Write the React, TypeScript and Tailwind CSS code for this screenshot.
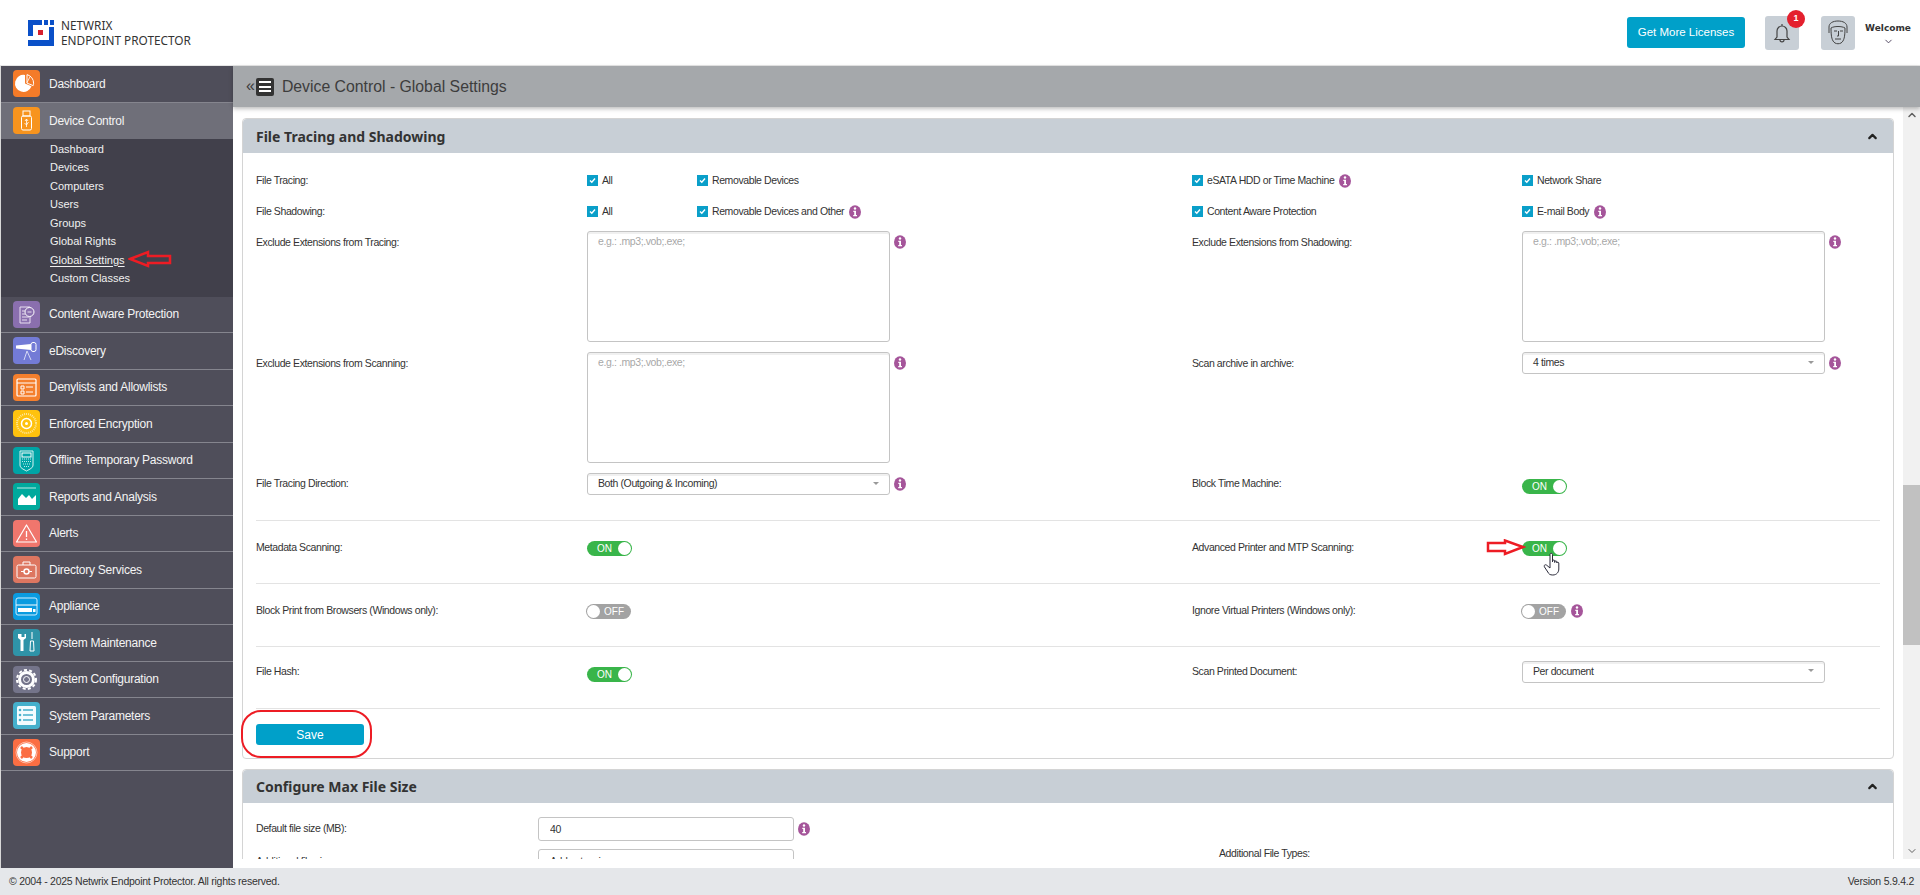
import React from "react";
import { ChevronDown, ChevronUp } from "lucide-react";

type IconProps = { className?: string };

const TileIcons: Record<string, React.ReactNode> = {
    pie: (
        <>
            <path d="M12 13.500V5a8.500 8.500 0 1 0 6.500 11.200z" fill="#fff" />
            <path d="M14 4.600a8.800 8.800 0 0 1 6.600 8.600c0 1-.1 1.700-.4 2.400l-6.200-2.500z" fill="none" stroke="#fff" strokeWidth="1" />
            <path d="M14 12.600l3.400-6.600" stroke="#fff" strokeWidth=".8" />
        </>
    ),
    usb: (
        <>
            <rect x="10" y="4" width="7" height="5" fill="none" stroke="#fff" />
            <rect x="8.500" y="9" width="10" height="14" rx="1.500" fill="none" stroke="#fff" />
            <path d="M13.500 12v8M12 14l1.500-2 1.500 2M11.500 16l2 2 2-3" fill="none" stroke="#fff" strokeWidth=".8" />
        </>
    ),
    doc: (
        <>
            <path d="M7 6h10v16H7z" fill="none" stroke="#e8dff0" />
            <circle cx="16.500" cy="11" r="4.500" fill="#8a6fae" stroke="#fff" />
            <path d="M9 10h3M9 13h3M9 16h7M9 19h5M14.500 11h4" stroke="#e8dff0" />
        </>
    ),
    scope: (
        <>
            <path d="M3 8.500l15-1.500v6L3 11.500z" fill="#fff" />
            <rect x="18" y="5.500" width="5" height="9" rx="2" fill="none" stroke="#fff" />
            <path d="M14 14l-3 9M14 14l4 9" stroke="#d5d8f4" fill="none" />
        </>
    ),
    browser: (
        <>
            <rect x="4" y="5" width="19" height="17" rx="1" fill="none" stroke="#fff" strokeWidth="1.200" />
            <path d="M4 9h19M8 12h3v3H8zM8 17h3v3H8zM13 13h7M13 18h7" stroke="#fff" fill="none" />
        </>
    ),
    dial: (
        <>
            <circle cx="13.500" cy="13.500" r="9.500" fill="none" stroke="#ffe79b" strokeDasharray="1 1" strokeWidth="2" />
            <circle cx="13.500" cy="13.500" r="5" fill="none" stroke="#fff" strokeWidth="1.500" />
            <circle cx="13.500" cy="13.500" r="1.500" fill="#fff" />
        </>
    ),
    token: (
        <>
            <path d="M7 4h13v14c0 3-3 4-6.500 6C10 22 7 21 7 18z" fill="none" stroke="#d8f3f3" />
            <rect x="9" y="6" width="9" height="4" fill="none" stroke="#fff" />
            <path d="M9 12h9M9 14.500h9M10 17h7M11 19.500h5" stroke="#bfe9e9" strokeDasharray="1 1" />
        </>
    ),
    chart: (
        <>
            <path d="M4 5h19" stroke="#bde9e5" />
            <path d="M5 22v-6l4-5 4 4 3-3 3 4 4-4v10z" fill="#fff" />
        </>
    ),
    alert: (
        <>
            <path d="M13.500 5L23.500 22h-20z" fill="none" stroke="#fff" strokeWidth="1.200" strokeLinejoin="round" />
            <path d="M13.500 11v6M13.500 18.500v1.500" stroke="#fff" strokeWidth="1.300" />
        </>
    ),
    case: (
        <>
            <rect x="4" y="9" width="19" height="13" rx="1.500" fill="none" stroke="#fff" />
            <path d="M10 9V6h7v3" fill="none" stroke="#fff" />
            <circle cx="13.500" cy="15.500" r="2.500" fill="none" stroke="#fff" strokeWidth="1.500" />
            <path d="M8 15.500h3M16 15.500h3" stroke="#fff" />
        </>
    ),
    appliance: (
        <>
            <rect x="3" y="5" width="21" height="17" rx="2" fill="none" stroke="#cfeeff" />
            <path d="M3 12h21" stroke="#fff" />
            <path d="M5 15h14v4H5z" fill="#fff" />
            <rect x="20" y="16" width="2.500" height="3" fill="#fff" />
        </>
    ),
    tools: (
        <>
            <path d="M5 5v4l2.500 2v11h3V11L13 9V5l-1.500 0v3h-3V5z" fill="#fff" />
            <path d="M19 3v7M17.500 12h3l.5 10h-4z" stroke="#fff" fill="none" />
        </>
    ),
    gear: (
        <>
            <circle cx="13.500" cy="13.500" r="7" fill="none" stroke="#fff" strokeWidth="3" />
            <circle cx="13.500" cy="13.500" r="9.500" fill="none" stroke="#fff" strokeWidth="2" strokeDasharray="3 2.240" />
            <circle cx="13.500" cy="13.500" r="3" fill="none" stroke="#fff" />
        </>
    ),
    list: (
        <>
            <rect x="4" y="4" width="19" height="19" rx="1.500" fill="#f2fbfe" />
            <path d="M10 8h10M10 13h10M10 18h10" stroke="#45b0cc" strokeWidth="1.300" />
            <circle cx="7" cy="8" r="1.300" fill="#45b0cc" />
            <circle cx="7" cy="13" r="1.300" fill="#45b0cc" />
            <circle cx="7" cy="18" r="1.300" fill="#45b0cc" />
        </>
    ),
    ring: (
        <>
            <circle cx="13.500" cy="13.500" r="7.500" fill="none" stroke="#fff" strokeWidth="4" />
            <circle cx="13.500" cy="13.500" r="10.500" fill="none" stroke="#ffd0c0" strokeWidth=".8" />
            <path d="M8 8l3 3M19 8l-3 3M8 19l3-3M19 19l-3-3" stroke="#fb6e43" strokeWidth="2.500" />
        </>
    ),
};

const menu = [
    { name: "Content Aware Protection", bg: "bg-[#8a6fae]", icon: "doc" },
    { name: "eDiscovery", bg: "bg-[#737bd6]", icon: "scope" },
    { name: "Denylists and Allowlists", bg: "bg-[#f47f2d]", icon: "browser" },
    { name: "Enforced Encryption", bg: "bg-[#ffc20e]", icon: "dial" },
    { name: "Offline Temporary Password", bg: "bg-[#00a4a6]", icon: "token" },
    { name: "Reports and Analysis", bg: "bg-[#00a99d]", icon: "chart" },
    { name: "Alerts", bg: "bg-[#f0766d]", icon: "alert" },
    { name: "Directory Services", bg: "bg-[#dd7660]", icon: "case" },
    { name: "Appliance", bg: "bg-[#0a9be0]", icon: "appliance" },
    { name: "System Maintenance", bg: "bg-[#2f93a8]", icon: "tools" },
    { name: "System Configuration", bg: "bg-[#74748a]", icon: "gear" },
    { name: "System Parameters", bg: "bg-[#45b0cc]", icon: "list" },
    { name: "Support", bg: "bg-[#fb6e43]", icon: "ring" },
];

const subMenu = ["Dashboard", "Devices", "Computers", "Users", "Groups", "Global Rights", "Global Settings", "Custom Classes"];

const Tile = ({ bg, icon }: { bg: string; icon: string }) => (
    <span className={`w-[27px] h-[27px] rounded-[4px] shrink-0 ${bg}`}>
        <svg viewBox="0 0 27 27" className="w-[27px] h-[27px]">{TileIcons[icon]}</svg>
    </span>
);

const MenuItem = ({ name, bg, icon, className = "" }: { name: string; bg: string; icon: string; className?: string }) => (
    <div className={`h-[36.500px] flex items-center pl-[12px] gap-[9px] border-b border-[#85858e] text-[12px] tracking-[-0.25px] text-[#f4f4f4] ${className}`}>
        <Tile bg={bg} icon={icon} />
        <span>{name}</span>
    </div>
);

const Info = ({ className = "" }: IconProps) => (
    <svg viewBox="0 0 12 14" className={`w-[12px] h-[14px] shrink-0 ${className}`}>
        <ellipse cx="6" cy="7" rx="6" ry="6.800" fill="#a5559a" />
        <circle cx="6" cy="3.500" r="1.200" fill="#fff" />
        <path d="M4.300 5.800h2.700v4.200h1v1.200H4.200V10h1V7H4.300z" fill="#fff" />
    </svg>
);

const Check = ({ label, info, className = "" }: { label: string; info?: boolean; className?: string }) => (
    <div className={`flex items-center ${className}`}>
        <span className="w-[11px] h-[11px] bg-[#0a9fc9] flex items-center justify-center -mt-[1px]">
            <svg viewBox="0 0 11 11" className="w-[11px] h-[11px]">
                <path d="M3 5.500l1.800 1.800L8 3.500" fill="none" stroke="#fff" strokeWidth="1.400" />
            </svg>
        </span>
        <span className="ml-[4px]">{label}</span>
        {info && <Info className="ml-[5px]" />}
    </div>
);

const Toggle = ({ on }: { on: boolean }) =>
    on ? (
        <div className="w-[45px] h-[15px] rounded-full bg-[#39b54a] flex items-center justify-between pl-[10px] pr-[1px] text-[10px] tracking-normal text-white">
            <span>ON</span>
            <span className="w-[13px] h-[13px] rounded-full bg-white" />
        </div>
    ) : (
        <div className="w-[45px] h-[15px] rounded-full bg-[#a3a3a3] flex items-center justify-between pl-[1px] pr-[7px] text-[10px] tracking-normal text-white -ml-[1px]">
            <span className="w-[13px] h-[13px] rounded-full bg-white" />
            <span>OFF</span>
        </div>
    );

const Area = () => (
    <textarea
        readOnly
        placeholder="e.g.: .mp3;.vob;.exe;"
        className="w-[303px] h-[111px] border border-[#c4c4c4] rounded-[3px] px-[10px] py-[2px] resize-none outline-none placeholder:text-[#a8a8a8] shadow-[inset_0_2px_0_#f0f0f0]"
    />
);

const Select = ({ value }: { value: string }) => (
    <div className="w-[303px] h-[22px] border border-[#c4c4c4] rounded-[3px] pl-[10px] pr-[10px] flex items-center justify-between shadow-[inset_0_2px_0_#f0f0f0]">
        <span>{value}</span>
        <span className="w-0 h-0 border-x-[3px] border-x-transparent border-t-[3px] border-t-[#999] -mt-[2px]" />
    </div>
);

const Row = ({ className = "", children }: { className?: string; children: React.ReactNode }) => (
    <div className={`grid grid-cols-[331px_605px_330px_1fr] ${className}`}>{children}</div>
);

const PanelHead = ({ title, className = "" }: { title: string; className?: string }) => (
    <div className={`bg-[#c8cfd6] rounded-t-[4px] flex items-center justify-between pl-[13px] pr-[14px] ${className}`}>
        <span className="text-[14px] font-bold tracking-normal text-[#333] font-['Noto_Sans',sans-serif]">{title}</span>
        <ChevronUp className="w-[13px] h-[13px] text-[#222]" strokeWidth={4} />
    </div>
);

const App = () => {
    return (
        <div className="relative h-screen flex flex-col overflow-hidden bg-white text-[10.500px] tracking-[-0.4px] text-[#333] font-['Liberation_Sans',Arial,sans-serif]">
            {/* top bar */}
            <header className="h-[66px] shrink-0 border-b border-[#e6e6e6] flex items-center pl-[28px] pr-[9px] tracking-normal">
                <svg viewBox="0 0 26 26" className="w-[26px] h-[26px]">
                    <path d="M0 0h14v5H5v11H0zM16 0h4v5h-4zM22 0h4v5h-4z" fill="#0a50c8" />
                    <path d="M21 7h5v19H0v-6h21z" fill="#0a50c8" />
                    <rect x="10" y="10" width="5" height="5" fill="#d6202e" />
                </svg>
                <div className="ml-[7px] text-[11.800px] leading-[15px] text-[#333] font-['Noto_Sans',sans-serif]">
                    <div>NETWRIX</div>
                    <div>ENDPOINT PROTECTOR</div>
                </div>
                <div className="ml-auto flex items-center">
                    <button className="w-[118px] h-[31px] rounded-[3px] bg-[#00a0c9] text-white text-[11.500px]">Get More Licenses</button>
                    <div className="relative ml-[20px] w-[34px] h-[34px] rounded-[3px] bg-[#c8cfd6] flex items-center justify-center">
                        <svg viewBox="0 0 24 24" className="w-[24px] h-[24px]" fill="none" stroke="#444" strokeWidth="1.200">
                            <path d="M12 3v2M7 16V10a5 5 0 0 1 10 0v6l2 2.500H5zM10 19c0 2.500 4 2.500 4 0" />
                        </svg>
                        <span className="absolute -top-[6px] -right-[6px] w-[18px] h-[18px] rounded-full bg-[#e4202e] text-white text-[9px] font-bold flex items-center justify-center">1</span>
                    </div>
                    <div className="ml-[22px] w-[34px] h-[34px] rounded-[3px] bg-[#c8cfd6] flex items-center justify-center">
                        <svg viewBox="0 0 26 28" className="w-[26px] h-[28px]" fill="none" stroke="#444" strokeWidth="1">
                            <path d="M4 14V8c0-4 4-6 9-6s9 2 9 6v6M6 9c0 9 1 13 4 15 2 1 4 1 6 0 3-2 4-6 4-15-3-2-11-2-14 0zM9 12h3M15 12h3M13.500 12v5h-1.500M10 20h6" />
                        </svg>
                    </div>
                    <div className="ml-[10px] w-[46px] pt-[4px] flex flex-col items-center gap-[1px] text-[9px] font-bold text-[#333] leading-[13px] font-['DejaVu_Sans',sans-serif]">
                        <span>Welcome</span>
                        <ChevronDown className="w-[11px] h-[11px] text-[#4a3f5c]" strokeWidth={2} />
                    </div>
                </div>
            </header>

            <div className="flex-1 flex min-h-0">
                {/* sidebar */}
                <aside className="w-[233px] shrink-0 bg-[#4f4e5a] border-l border-[#d8d8d8]">
                    <MenuItem name="Dashboard" bg="bg-[#f47b29]" icon="pie" />
                    <MenuItem name="Device Control" bg="bg-[#f7941e]" icon="usb" className="bg-[#6f6f79] border-b-0 h-[36px]" />
                    <div className="h-[158px] bg-[#41404b] pl-[49px] pt-[1px] text-[#f0f0f0] text-[11px] tracking-normal leading-[18.500px]">
                        {subMenu.map((item) => (
                            <div key={item}>
                                <span className={item === "Global Settings" ? "underline underline-offset-2" : ""}>{item}</span>
                            </div>
                        ))}
                    </div>
                    {menu.map((item) => (
                        <MenuItem key={item.name} name={item.name} bg={item.bg} icon={item.icon} />
                    ))}
                </aside>

                {/* page */}
                <main className="flex-1 min-w-0 flex flex-col pb-[9px]">
                    <div className="h-[41px] shrink-0 bg-[#a5a8ab] flex items-center pl-[13px] text-[#3d3d3d] tracking-normal shadow-[0_2px_4px_rgba(0,0,0,0.25)] relative z-10">
                        <span className="text-[16px] leading-none -mt-[2px]">«</span>
                        <span className="w-[18px] h-[18px] ml-[1px] rounded-[2px] bg-[#333] flex flex-col justify-center gap-[2.500px] px-[3px]">
                            <i className="block h-[2px] bg-white" />
                            <i className="block h-[2px] bg-white" />
                            <i className="block h-[2px] bg-white" />
                        </span>
                        <span className="ml-[8px] text-[15.800px]">Device Control - Global Settings</span>
                    </div>

                    <div className="flex-1 min-h-0 flex">
                        <div className="flex-1 min-w-0 overflow-hidden pt-[11px] pl-[9px] pr-[9px]">
                            <section className="h-[641px] border border-[#d4d4d4] rounded-[4px]">
                                <PanelHead title="File Tracing and Shadowing" className="h-[34px]" />
                                <div className="pl-[13px] pr-[13px] pt-[12px]">
                                    <Row className="h-[31px] items-center">
                                        <span>File Tracing:</span>
                                        <div className="flex">
                                            <Check label="All" className="w-[110px]" />
                                            <Check label="Removable Devices" />
                                        </div>
                                        <Check label="eSATA HDD or Time Machine" info />
                                        <Check label="Network Share" />
                                    </Row>
                                    <Row className="h-[31px] items-center">
                                        <span>File Shadowing:</span>
                                        <div className="flex">
                                            <Check label="All" className="w-[110px]" />
                                            <Check label="Removable Devices and Other" info />
                                        </div>
                                        <Check label="Content Aware Protection" />
                                        <Check label="E-mail Body" info />
                                    </Row>
                                    <Row className="mt-[4px]">
                                        <span className="pt-[4px]">Exclude Extensions from Tracing:</span>
                                        <div className="flex gap-[4px]">
                                            <Area />
                                            <Info className="mt-[4px]" />
                                        </div>
                                        <span className="pt-[4px]">Exclude Extensions from Shadowing:</span>
                                        <div className="flex gap-[4px]">
                                            <Area />
                                            <Info className="mt-[4px]" />
                                        </div>
                                    </Row>
                                    <Row className="mt-[10px]">
                                        <span className="pt-[4px]">Exclude Extensions from Scanning:</span>
                                        <div className="flex gap-[4px]">
                                            <Area />
                                            <Info className="mt-[4px]" />
                                        </div>
                                        <span className="pt-[4px]">Scan archive in archive:</span>
                                        <div className="flex gap-[4px] items-start">
                                            <Select value="4 times" />
                                            <Info className="mt-[4px]" />
                                        </div>
                                    </Row>
                                    <Row className="mt-[10px] h-[22px] items-center">
                                        <span>File Tracing Direction:</span>
                                        <div className="flex gap-[4px] items-center">
                                            <Select value="Both (Outgoing & Incoming)" />
                                            <Info />
                                        </div>
                                        <span>Block Time Machine:</span>
                                        <div className="pt-[5px]"><Toggle on /></div>
                                    </Row>
                                    <div className="h-[26px] border-b border-[#e3e3e3]" />
                                    <Row className="h-[63px] pb-[8px] items-center border-b border-[#e3e3e3]">
                                        <span>Metadata Scanning:</span>
                                        <Toggle on />
                                        <span>Advanced Printer and MTP Scanning:</span>
                                        <Toggle on />
                                    </Row>
                                    <Row className="h-[63px] pb-[8px] items-center border-b border-[#e3e3e3]">
                                        <span>Block Print from Browsers (Windows only):</span>
                                        <Toggle on={false} />
                                        <span>Ignore Virtual Printers (Windows only):</span>
                                        <div className="flex items-center gap-[5px]">
                                            <Toggle on={false} />
                                            <Info />
                                        </div>
                                    </Row>
                                    <Row className="h-[62px] pb-[12px] items-center border-b border-[#e3e3e3]">
                                        <span className="pt-[1px]">File Hash:</span>
                                        <div className="pt-[5px]"><Toggle on /></div>
                                        <span className="pt-[1px]">Scan Printed Document:</span>
                                        <Select value="Per document" />
                                    </Row>
                                    <button className="mt-[15px] w-[108px] h-[21px] rounded-[3px] bg-[#00a0c9] text-white text-[12px] tracking-normal block">Save</button>
                                </div>
                            </section>

                            <section className="mt-[10px] h-[200px] border border-[#d4d4d4] rounded-[4px]">
                                <PanelHead title="Configure Max File Size" className="h-[33px]" />
                                <div className="pl-[13px] pt-[14px] grid grid-cols-[282px_681px_1fr]">
                                    <span className="pt-[4px]">Default file size (MB):</span>
                                    <div className="col-span-2 flex items-center gap-[4px]">
                                        <input readOnly value="40" className="w-[256px] h-[24px] border border-[#c4c4c4] rounded-[3px] px-[11px] outline-none" />
                                        <Info />
                                    </div>
                                    <span className="mt-[13px]">Additional file size:</span>
                                    <input readOnly value="Add extensions" className="mt-[8px] w-[256px] h-[24px] border border-[#c4c4c4] rounded-[3px] px-[11px] outline-none" />
                                    <span className="mt-[5px]">Additional File Types:</span>
                                </div>
                            </section>
                        </div>

                        {/* scrollbar */}
                        <div className="w-[17px] shrink-0 bg-[#f1f1f1] flex flex-col items-center text-[#606060]">
                            <ChevronUp className="w-[12px] h-[12px] mt-[2px]" strokeWidth={3} />
                            <div className="w-full h-[160px] bg-[#c1c1c1] mt-[364px]" />
                            <ChevronDown className="w-[12px] h-[12px] mt-auto mb-[2px]" strokeWidth={2} />
                        </div>
                    </div>
                </main>
            </div>

            <footer className="h-[27px] shrink-0 bg-[#e5e7ea] flex items-center justify-between pl-[9px] pr-[6px] text-[10.500px] tracking-[-0.25px] text-[#333]">
                <span>© 2004 - 2025 Netwrix Endpoint Protector. All rights reserved.</span>
                <span>Version 5.9.4.2</span>
            </footer>

            {/* markup drawn over the screenshot */}
            <svg viewBox="0 0 44 18" className="absolute left-[128px] top-[250px] w-[44px] h-[18px] pointer-events-none">
                <polygon points="2,9 20,2 20,6 42,6 42,13 20,13 20,16" fill="none" stroke="#ed1c24" strokeWidth="2.500" />
            </svg>
            <svg viewBox="0 0 40 17" className="absolute left-[1486px] top-[539px] w-[40px] h-[17px] pointer-events-none">
                <polygon points="2,4 19,4 19,1.500 37,8 19,15 19,12 2,12" fill="#fff" stroke="#ed1c24" strokeWidth="2.500" />
            </svg>
            <div className="absolute left-[241px] top-[710px] w-[131px] h-[48px] border-[2.500px] border-[#ed1c24] rounded-[20px] pointer-events-none" />
            <svg viewBox="0 0 20 24" className="absolute left-[1543px] top-[552px] w-[20px] h-[24px] pointer-events-none">
                <path d="M7 15V2.500c0-1.600 2.500-1.600 2.500 0V10V9c0-1.300 2.200-1.300 2.200 0v1.500V9.800c0-1.200 2.100-1.200 2.100 0v1.200c0-1 2-1 2 0v6c0 3-2 6-6 6-3 0-4-1-5-3L1.500 15c-1-2 1-3 2.500-1.500L7 16z" fill="#fff" stroke="#2b2b3a" strokeWidth="1" strokeLinejoin="round" />
            </svg>
        </div>
    );
};

export default App;
